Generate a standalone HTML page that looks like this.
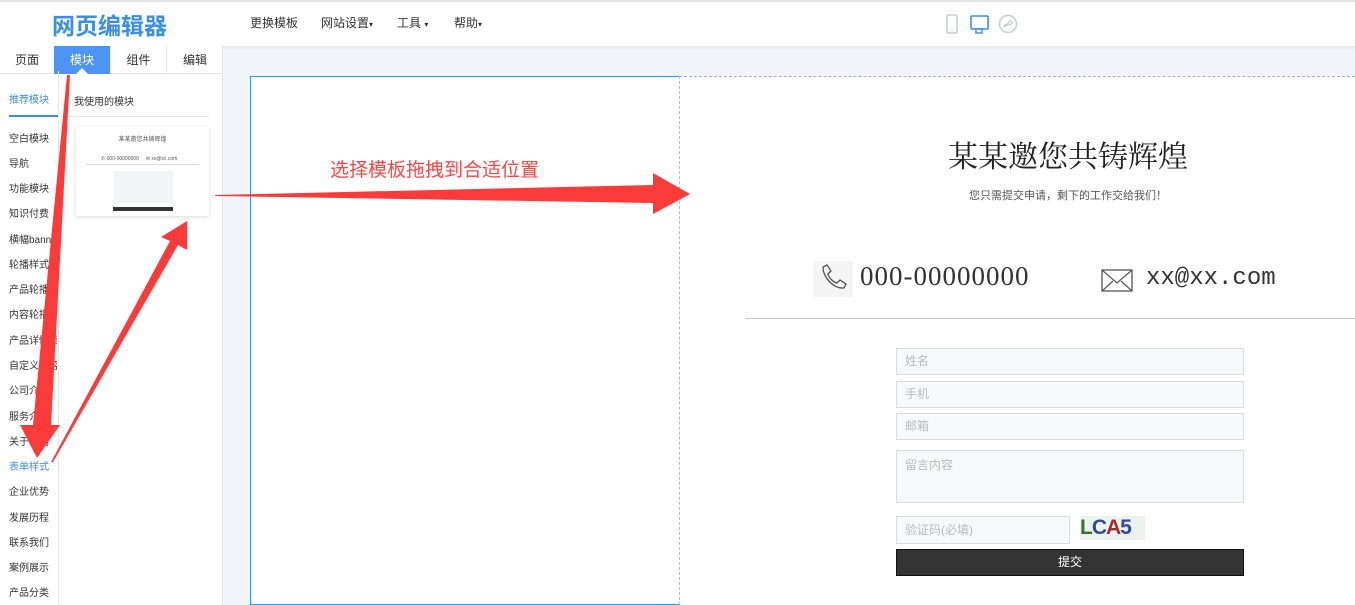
<!DOCTYPE html>
<html><head><meta charset="utf-8"><style>
*{margin:0;padding:0;box-sizing:border-box}
body{width:1355px;height:605px;overflow:hidden;background:#f1f4f8;font-family:"Liberation Sans","Noto Sans CJK SC",sans-serif;position:relative;font-size:12px;color:#333}
.hdr{position:absolute;left:0;top:0;width:1355px;height:46px;background:#fff;border-top:2px solid #e4e4e4;box-shadow:0 2px 3px rgba(0,0,0,.05)}
.logo{position:absolute;left:52px;top:5px;font-size:23px;font-weight:bold;color:#3a8ee6;letter-spacing:0px}
.menu{position:absolute;top:12px;font-size:12px;color:#333}
.side{position:absolute;left:0;top:46px;width:223px;height:559px;background:#fff;border-right:1px solid #e6e6e6}
.tab{position:absolute;top:0;height:28px;line-height:28px;text-align:center;font-size:12px;color:#333;border-bottom:1px solid #e6e6e6}
.list{position:absolute;left:0;top:25px;width:59px;height:534px;border-right:1px solid #e6e6e6}
.list div{position:absolute;left:9px;font-size:10px;color:#333;white-space:nowrap;width:48px;overflow:hidden}
.canvasL{position:absolute;left:250px;top:76px;width:430px;height:529px;background:#fff;border:1px solid #2b95ff}
.canvasR{position:absolute;left:679px;top:76px;width:676px;height:529px;background:#fff;border-top:1px dashed #aac;border-left:1px dashed #bbb}
.inp{position:absolute;background:#f7f8fa;border:1px solid #ddd;color:#bbb;font-size:12px;padding-left:8px;line-height:24px}
</style></head><body>
<div class="hdr">
<div class="logo">网页编辑器</div>
<div class="menu" style="left:250px">更换模板</div>
<div class="menu" style="left:321px">网站设置<span style="font-size:8px">▾</span></div>
<div class="menu" style="left:397px">工具 <span style="font-size:8px">▾</span></div>
<div class="menu" style="left:454px">帮助<span style="font-size:8px">▾</span></div>
<svg style="position:absolute;left:940px;top:10px" width="80" height="26">
<rect x="7" y="3" width="10" height="18" rx="1.5" fill="none" stroke="#c8cbd6" stroke-width="1.5"/><circle cx="12" cy="18" r=".8" fill="#c8cbd6"/>
<rect x="31" y="4" width="17" height="13" rx="1" fill="none" stroke="#3a8ee6" stroke-width="1.6"/><rect x="36" y="17" width="6" height="4" fill="none" stroke="#3a8ee6" stroke-width="1.4"/>
<circle cx="68" cy="12" r="8.5" fill="none" stroke="#c8cbd6" stroke-width="1.5"/><path d="M64 15c0-3 3-2 4-4s3-3 4-1-2 3-4 2M68 12c-1 2-3 3-4 1" fill="none" stroke="#c8cbd6" stroke-width="1.3"/>
</svg>
</div>
<div class="side">
<div class="tab" style="left:0;width:54px">页面</div>
<div class="tab" style="left:54px;width:56px;background:#4c94f5;color:#fff;border-bottom-color:#4c94f5">模块</div>
<div style="position:absolute;left:76px;top:22px;border:6px solid transparent;border-bottom-color:#fff;border-top:0"></div>
<div class="tab" style="left:110px;width:56px;border-left:1px solid #e6e6e6">组件</div>
<div class="tab" style="left:166px;width:57px;border-left:1px solid #e6e6e6">编辑</div>
<div class="list">
<div style="top:20px;color:#3a8ee6">推荐模块</div>
<div style="top:59px">空白模块</div><div style="top:84px">导航</div><div style="top:109px">功能模块</div><div style="top:134px">知识付费</div><div style="top:160px">横幅banner</div><div style="top:185px">轮播样式</div><div style="top:210px">产品轮播</div><div style="top:235px">内容轮播</div><div style="top:261px">产品详情页</div><div style="top:286px">自定义内容</div><div style="top:311px">公司介绍</div><div style="top:337px">服务介绍</div><div style="top:362px">关于我们</div><div style="top:387px;color:#3a8ee6">表单样式</div><div style="top:412px">企业优势</div><div style="top:438px">发展历程</div><div style="top:463px">联系我们</div><div style="top:488px">案例展示</div><div style="top:513px">产品分类</div>
</div>
<div style="position:absolute;left:9px;top:69px;width:49px;height:2px;background:#3a8ee6"></div>
<div style="position:absolute;left:74px;top:47px;font-size:10px">我使用的模块</div>
<div style="position:absolute;left:59px;top:70px;width:150px;height:1px;background:#e6e6e6"></div>
<div style="position:absolute;left:76px;top:80px;width:133px;height:90px;background:#fff;box-shadow:0 1px 4px rgba(0,0,0,.15)">
<div style="position:absolute;top:8px;width:100%;text-align:center;font-size:6px;color:#555">某某邀您共铸辉煌</div>
<div style="position:absolute;top:30px;left:25px;font-size:5px;color:#555">✆ 000-00000000 &nbsp;&nbsp;&nbsp; ✉ xx@xx.com</div>
<div style="position:absolute;top:38px;left:10px;width:113px;height:1px;background:#ddd"></div>
<div style="position:absolute;top:45px;left:37px;width:60px;height:32px;background:#f3f4f6"></div>
<div style="position:absolute;top:81px;left:37px;width:60px;height:4px;background:#333"></div>
</div>
</div>
<div class="canvasL"></div>
<div class="canvasR">
<div style="position:absolute;top:55px;left:0;width:776px;text-align:center;font-family:'Liberation Serif','Noto Serif CJK SC',serif;font-size:30px;color:#222">某某邀您共铸辉煌</div>
<div style="position:absolute;top:110px;left:0;width:776px;text-align:center;font-size:11px;color:#555">您只需提交申请，剩下的工作交给我们！</div>
<div style="position:absolute;left:133px;top:184px;width:40px;height:36px;background:#f4f4f4"></div>
<svg style="position:absolute;left:138px;top:186px" width="30" height="30"><path d="M5 4l4-2 4 6-3 3c1 4 5 8 9 9l3-3 6 4-2 4c-10 1-21-10-21-21z" fill="none" stroke="#555" stroke-width="1.3"/></svg>
<div style="position:absolute;left:180px;top:184px;font-family:'Liberation Serif','DejaVu Serif',serif;font-size:27px;color:#333;letter-spacing:1px">000-00000000</div>
<svg style="position:absolute;left:421px;top:192px" width="32" height="24"><rect x="1" y="1" width="30" height="21" fill="none" stroke="#555" stroke-width="1.3"/><path d="M1 1l15 13 15-13M1 22l11-10M31 22l-11-10" fill="none" stroke="#555" stroke-width="1.2"/></svg>
<div style="position:absolute;left:466px;top:188px;font-family:'Liberation Mono',monospace;font-size:24px;color:#333">xx@xx.com</div>
<div style="position:absolute;left:65px;top:241px;width:611px;height:1px;background:#ccc"></div>
<div class="inp" style="left:216px;top:271px;width:348px;height:27px">姓名</div>
<div class="inp" style="left:216px;top:304px;width:348px;height:27px">手机</div>
<div class="inp" style="left:216px;top:336px;width:348px;height:27px">邮箱</div>
<div class="inp" style="left:216px;top:373px;width:348px;height:53px;line-height:28px">留言内容</div>
<div class="inp" style="left:216px;top:439px;width:174px;height:28px;line-height:26px">验证码(必填)</div>
<div style="position:absolute;left:400px;top:439px;width:65px;height:24px;background:#eef2ee;font-weight:bold;font-size:21px;line-height:24px;letter-spacing:-1px"><span style="color:#2a7a2a">L</span><span style="color:#2a4aa8">C</span><span style="color:#a82a2a">A</span><span style="color:#2a4aa8">5</span></div>
<div style="position:absolute;left:216px;top:472px;width:348px;height:27px;background:#333;border:1px solid #111;color:#fff;text-align:center;line-height:25px;font-size:12px">提交</div>
</div>
<div style="position:absolute;left:330px;top:155px;font-size:19px;color:#f44">选择模板拖拽到合适位置</div>
<svg style="position:absolute;left:0;top:0" width="1355" height="605">
<polygon fill="#fb3a3a" points="215,195 653,185 653,173 690,194 653,214 653,203 215,196"/>
<polygon fill="#fb3a3a" points="67,75 70,75 51,425 60,425 37,458 20,425 33,425"/>
<polygon fill="#fb3a3a" points="51,462 53,462 178,245 187,250 187,221 161,237 170,241"/>
</svg>
</body></html>
